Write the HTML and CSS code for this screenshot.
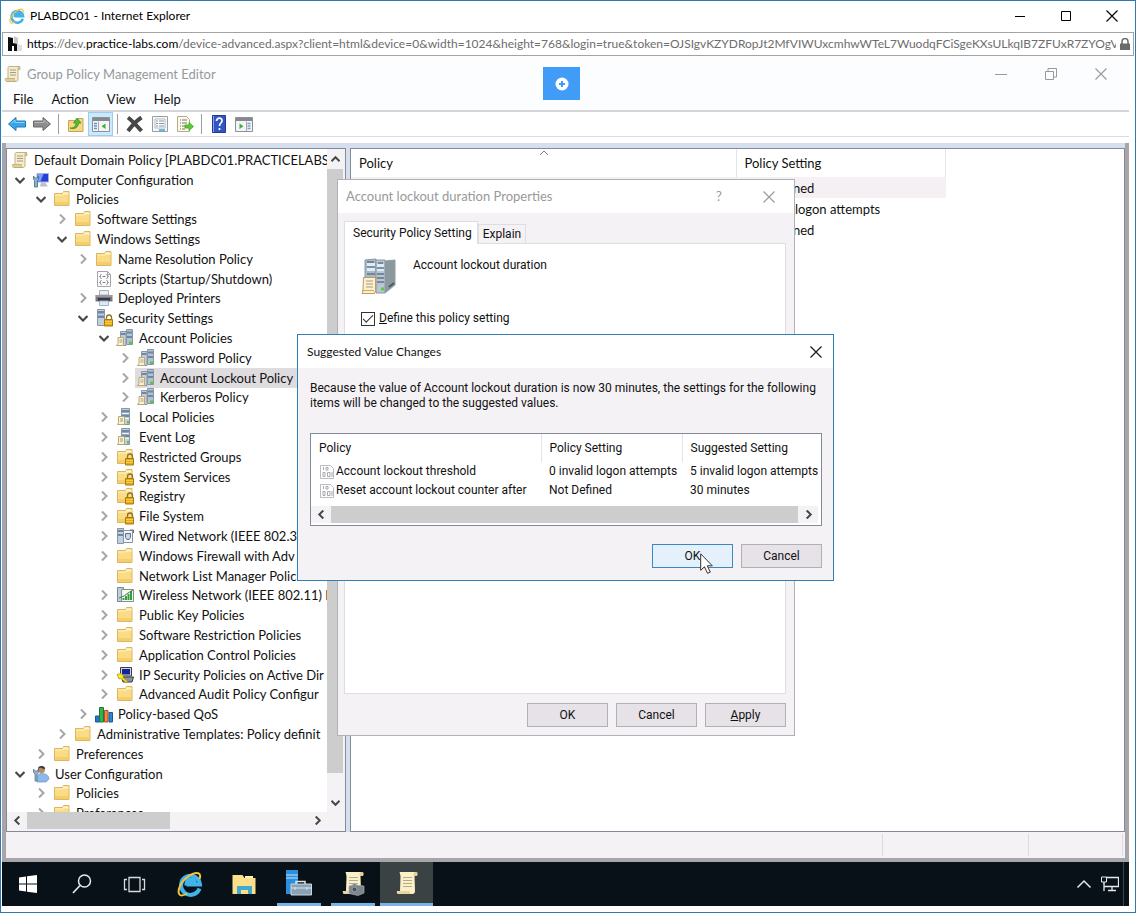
FILE: index.html
```html
<!DOCTYPE html>
<html lang="en">

<head>
    <meta charset="UTF-8">
    <meta name="viewport" content="width=device-width, initial-scale=1.0">
    <title>PLABDC01 - Internet Explorer</title>
    <link rel="stylesheet" href="styles.css">
</head>

<body>
    <!-- Shared icons -->
    <svg class="sprite" aria-hidden="true">
        <symbol id="open" viewBox="0 0 10 10"><path d="M0.500 3l4.500 4.500L9.500 3" fill="none" stroke="#484848" stroke-width="2.200"/></symbol>
        <symbol id="closed" viewBox="0 0 10 10"><path d="M3 0.500L7.500 5 3 9.500" fill="none" stroke="#a6a6a6" stroke-width="2"/></symbol>
        <symbol id="close" viewBox="0 0 12 12"><path d="M0.500 0.500l11 11M11.500 0.500l-11 11" fill="none" stroke="currentColor" stroke-width="1.100"/></symbol>
        <symbol id="folder" viewBox="0 0 18 18">
            <path d="M1.500 3.500h8l1-2h5.500v14h-14.500z" fill="#fbdc86" stroke="#dcb660"/>
            <path d="M10 2.500h5v1.500h-5z" fill="#fff6d8"/>
            <path d="M2 5h8l1-1h5" stroke="#fff0bd" fill="none"/>
            <path d="M2 12h13.500v3H2z" fill="#f5cd6b"/>
        </symbol>
        <symbol id="lock" viewBox="0 0 18 18">
            <path d="M11.500 11V8.500a2.500 2.500 0 0 1 5 0V11" fill="none" stroke="#8e7328" stroke-width="1.300"/>
            <path d="M9.500 10.500h8v6.500h-8z" fill="#e3a914" stroke="#a97a0b"/>
            <path d="M10 12.500h7M10 14.500h7" stroke="#f7cf52"/>
        </symbol>
        <symbol id="lockfolder" viewBox="0 0 18 18"><use href="#folder"/><use href="#lock"/></symbol>
        <symbol id="scroll" viewBox="0 0 18 18">
            <path d="M5 1.500h11c-2 0-2 1.500-2 3V14c0 2-1 2.500-2 2.500H3.500L4 13.500V4c0-1.500 0-2 1-2.500z" fill="#f6eccb" stroke="#c3b283"/>
            <path d="M14 1.500c2 0 2.500 2 2 3h-2" fill="#d8c48d" stroke="#b8a46d" stroke-width=".7"/>
            <path d="M1.500 13.500h9c-1 1.500 0 3 1.500 3H3c-1.500 0-2-1.500-1.500-3z" fill="#e2cf98" stroke="#b8a46d" stroke-width=".7"/>
            <path d="M6 5h6M6 7.500h6M6 10h6" stroke="#a59b83"/>
        </symbol>
        <symbol id="computer" viewBox="0 0 18 18">
            <path d="M5 2.500h11.500v8.500H5z" fill="#2440d8" stroke="#a9b4c8"/>
            <path d="M5.500 3h6l-3 7.500h-3z" fill="#7d9bfa"/>
            <path d="M9 11.500h4l3 4h-8z" fill="#b9c0ce"/>
            <path d="M1.500 5v3.500l1 1v6.500h3V9.500l1-1V5l-1.500 2h-2z" fill="#8eb1cf" stroke="#41698f" stroke-width=".8"/>
        </symbol>
        <symbol id="user" viewBox="0 0 18 18">
            <circle cx="9.500" cy="4.500" r="3.500" fill="#b98a63"/>
            <path d="M6 4c0-4 7-4 7.200 0-2 0-4-1-4.500-1.500z" fill="#3f352f"/>
            <path d="M4 15c0-5 3-6.500 6-6.500S17 10 17 14l-3 3H5z" fill="#8bb9e8" stroke="#6d96c4" stroke-width=".7"/>
            <path d="M1.500 4v3.500L3 9v7h2V9l1.500-1.500V4L5 6H3z" fill="#9bb0c6" stroke="#526d8b" stroke-width=".7"/>
        </symbol>
        <symbol id="script" viewBox="0 0 18 18">
            <path d="M2.500 1.500h10l3 3v12h-13z" fill="#fafafa" stroke="#a4a4a8"/>
            <path d="M12.500 1.500v3h3" fill="none" stroke="#a4a4a8"/>
            <path d="M6.500 4.500c-2 0 0 2-2 2 2 0 0 2 2 2M11.500 4.500c2 0 0 2 2 2-2 0 0 2-2 2M7.500 6.500h3M6.500 10.500c-2 0 0 2-2 2 2 0 0 2 2 2M11.500 10.500c2 0 0 2 2 2-2 0 0 2-2 2M7.500 12.500h3" fill="none" stroke="#7c7c84"/>
        </symbol>
        <symbol id="printer" viewBox="0 0 18 18">
            <path d="M4.500 1.500h9V6h-9z" fill="#edf1f7" stroke="#a8b0bb"/>
            <path d="M0.500 6h17v6.500H.5z" fill="#77797f"/>
            <path d="M1 7h16" stroke="#b7b9be"/>
            <path d="M3 9h12v3H3z" fill="#37393f"/>
            <path d="M4.500 12h9v4.500h-9z" fill="#dceaf8" stroke="#9db5d0"/>
        </symbol>
        <symbol id="tower" viewBox="0 0 18 18">
            <path d="M5.500.5h8v16h-8z" fill="#c3d0dc" stroke="#8797a8"/>
            <path d="M6 2h7v2.500H6zM6 6.500h7V9H6z" fill="#6d88a3"/>
            <path d="M6 5.500h7M6 10.500h7" stroke="#eef4fa"/>
            <path d="M11 13h2.500v2.500H11z" fill="#63c04a"/>
        </symbol>
        <symbol id="server" viewBox="0 0 18 18">
            <use href="#tower"/>
            <path d="M2.500 8.500h6v8h-7l1-2z" fill="#f8f1d8" stroke="#baa86f"/>
            <path d="M4 11h3M4 13h3" stroke="#a79b7b"/>
        </symbol>
        <symbol id="servers" viewBox="0 0 18 18">
            <path d="M4.500 2.500h5.500v14H4.500z" fill="#c3d0dc" stroke="#8797a8"/>
            <path d="M10.500.5h6v15h-6z" fill="#b3c2d0" stroke="#8797a8"/>
            <path d="M5 4h4.500v2H5zM11 2.500h5v2h-5zM11 7h5v2h-5z" fill="#6d88a3"/>
            <path d="M13 12.500h3V15h-3z" fill="#63c04a"/>
            <path d="M2 8.500h5.500v8h-7l1.500-2z" fill="#f8f1d8" stroke="#baa86f"/>
            <path d="M3.500 11h3M3.500 13h3" stroke="#a79b7b"/>
        </symbol>
        <symbol id="lockserver" viewBox="0 0 18 18">
            <path d="M2.500.5h7v16h-7z" fill="#c3d0dc" stroke="#8797a8"/>
            <path d="M3 2h6v2.500H3zM3 6.500h6V9H3z" fill="#6d88a3"/>
            <use href="#lock"/>
        </symbol>
        <symbol id="wired" viewBox="0 0 18 18">
            <path d="M1.500 1.500h6v15h-6z" fill="#c3d0dc" stroke="#8797a8"/>
            <path d="M2 3h5v2H2zM2 7h5v2H2z" fill="#6d88a3"/>
            <path d="M7.500 3.500h9v12h-9z" fill="#f5f7fa" stroke="#8592a2"/>
            <path d="M9.500 6.500h5v4l-1.500 2h-2l-1.500-2z" fill="#c8d5e4" stroke="#58718e"/>
            <path d="M14 3h3.500v3" fill="none" stroke="#6b6b6b"/>
        </symbol>
        <symbol id="wireless" viewBox="0 0 18 18">
            <path d="M1.500 1.500h6v14h-6z" fill="#c3cedb" stroke="#75879a"/>
            <path d="M5.500 3.500h12v12h-12z" fill="#f3faf1" stroke="#80937c"/>
            <path d="M7.500 14v-2M10 14v-4M12.500 14V8M15 14V5" stroke="#2f9f47" stroke-width="2"/>
            <path d="M3 12l5-2 4-3 5-3" fill="none" stroke="#51715a"/>
        </symbol>
        <symbol id="ipsec" viewBox="0 0 18 18">
            <path d="M4.500 1.500h11v8.500h-11z" fill="#d3d6dc" stroke="#3e3e46"/>
            <path d="M6 3h8v5.500H6z" fill="#13249a"/>
            <path d="M5.500 11h12l-1.500 5H7z" fill="#8e9299" stroke="#3e3e46"/>
            <path d="M1 8.500l4-1 2.500 2.500-.5 1.500 5 4.500-2 .500-5-4-2 .500z" fill="#ffe81d" stroke="#a28f06" stroke-width=".7"/>
        </symbol>
        <symbol id="bars" viewBox="0 0 18 18">
            <path d="M0.500 11h4v6h-4z" fill="#2278c9" stroke="#175895"/>
            <path d="M4.500 2.500h4V17h-4z" fill="#36b04f" stroke="#1d7a34"/>
            <path d="M9.500 5.500h3.500V17H9.500z" fill="#f08a43" stroke="#ad5420"/>
            <path d="M14 7.500h3.500V17H14z" fill="#3286cf" stroke="#175895"/>
        </symbol>
        <symbol id="item" viewBox="0 0 16 16">
            <path d="M1.500 1.500h10l3 3v10h-13z" fill="#fff" stroke="#bcbcc0"/>
            <path d="M4.500 3v3M7 3.500h2v2.500H7zM4 8.500h2v4H4zM8.500 8.500h2.500v4H8.500zM13 8v5" fill="none" stroke="#a8a8ae"/>
        </symbol>
        <symbol id="ie" viewBox="0 0 26 26">
            <path d="M22.500 17.500A9.500 9.500 0 1 1 23 13.500H9.500M9.500 12.500h8.500c-.5-5-8-5-8.500 0z" fill="none" stroke="#3fb3ea" stroke-width="4"/>
            <path d="M22.500 8C25 2 20-.5 12 5 3 11 0 20 2.500 23.500c1.500 2 5 .5 7.500-1" fill="none" stroke="#f3c53d" stroke-width="2"/>
        </symbol>
        <symbol id="bigscroll" viewBox="0 0 26 26">
            <path d="M6 2h17c-3 0-3 2-2.500 4l.5 15c0 2-1 3-2.500 3H5c-2 0-2.500-2-2-3h3l.5-14C6.500 4 5 2 6 2z" fill="#fcf0c9"/>
            <path d="M6 2h15c-2 1-2 3-1 4h3c1-2 1-4-1-4z" fill="#e6d195"/>
            <path d="M3 21h13c-1 1.500 0 3 2.500 3H5c-2 0-2.500-2-2-3z" fill="#ead69c"/>
            <path d="M9 7.500h9M9 10.500h9M9 13.500h9M9 16.500h9" stroke="#b4aa8e"/>
        </symbol>
    </svg>

    <div class="browser">
        <header class="browser-title">
            <svg class="icon-16"><use href="#ie"/></svg>
            <h1>PLABDC01 - Internet Explorer</h1>
            <div class="browser-controls">
                <button aria-label="Minimize"><svg viewBox="0 0 12 12"><path d="M1 6.500h10" stroke="currentColor"/></svg></button>
                <button aria-label="Maximize"><svg viewBox="0 0 12 12"><path d="M1.500 1.500h9v9h-9z" fill="none" stroke="currentColor"/></svg></button>
                <button aria-label="Close"><svg><use href="#close"/></svg></button>
            </div>
        </header>

        <div class="address">
            <svg class="icon-16" viewBox="0 0 16 16"><path d="M7 0l4 2v13H7z" fill="#c9c9c9"/><path d="M10 8l5 1v6h-5z" fill="#dedede"/><path d="M1 1l5 1v5l4 1v7H7v-5H5v5H1z" fill="#0c0c0c"/></svg>
            <p class="url"><b>https</b>://dev.<b>practice-labs.com</b>/device-advanced.aspx?client=html&amp;device=0&amp;width=1024&amp;height=768&amp;login=true&amp;token=OJSIgvKZYDRopJt2MfVIWUxcmhwWTeL7WuodqFCiSgeKXsULkqIB7ZFUxR7ZYOgV</p>
            <svg class="padlock" viewBox="0 0 10 12"><path d="M2 6V3.500a3 3 0 0 1 6 0V6" fill="none" stroke="#6b6b6b" stroke-width="1.500"/><path d="M0 5.500h10V12H0z" fill="#6b6b6b"/></svg>
        </div>

        <main class="remote">
            <div class="console">
                <header class="console-title">
                    <svg class="icon-18"><use href="#scroll"/></svg>
                    <h2>Group Policy Management Editor</h2>
                    <div class="console-controls">
                        <button aria-label="Minimize"><svg viewBox="0 0 12 12"><path d="M0 6.500h12" stroke="currentColor"/></svg></button>
                        <button aria-label="Restore"><svg viewBox="0 0 12 12"><path d="M.5 3.500h8v8h-8zM3 3V.5h8.500V9H9" fill="none" stroke="currentColor"/></svg></button>
                        <button aria-label="Close"><svg><use href="#close"/></svg></button>
                    </div>
                </header>

                <nav class="menu">
                    <button>File</button>
                    <button>Action</button>
                    <button>View</button>
                    <button>Help</button>
                </nav>

                <div class="toolbar">
                    <button aria-label="Back"><svg viewBox="0 0 18 18"><path d="M.5 9L8 2.500V6h9.500v6H8v3.500z" fill="#3aa6ea" stroke="#1f78b8"/><path d="M3 8.500L7 5v2.500h9.500" fill="none" stroke="#8fd2fa"/></svg></button>
                    <button aria-label="Forward"><svg viewBox="0 0 18 18"><path d="M17.500 9L10 2.500V6H.5v6H10v3.500z" fill="#8d8d8d" stroke="#686868"/><path d="M1.500 7.500H11V5l4 3.500" fill="none" stroke="#b8b8b8"/></svg></button>
                    <span class="separator"></span>
                    <button aria-label="Up one level"><svg viewBox="0 0 18 18"><path d="M1.500 5.500h8l1.500-2h5v13H1.500z" fill="#f6d783" stroke="#c9a452"/><path d="M3 13c4 0 6-2 6-5H6.500L10 3l4 5h-2.500c0 4-4 7-8.500 5z" fill="#56bd32" stroke="#35861c" stroke-width=".7"/></svg></button>
                    <button class="pressed" aria-label="Show console tree"><svg viewBox="0 0 18 18"><path d="M.5 2.500h17v14H.5z" fill="#f4f4f6" stroke="#8d9097"/><path d="M1 3h16v3H1z" fill="#85888f"/><path d="M2 8.500h3M2 11h3M2 13.500h3" stroke="#5c93d0" stroke-width="1.300"/><path d="M6.500 6.500v9.500" stroke="#a6a8ae"/><path d="M13.500 8.500v5.500l-4-2.800z" fill="#45ab3c"/></svg></button>
                    <span class="separator"></span>
                    <button aria-label="Delete"><svg viewBox="0 0 18 18"><path d="M2 2.500c4 3 9 8.500 13.500 13.500M15.500 2.500C10 6 5 12 2 16" fill="none" stroke="#484848" stroke-width="4"/></svg></button>
                    <button aria-label="Properties"><svg viewBox="0 0 18 18"><path d="M1.500 1.500h15v15h-15z" fill="#f5f7f9" stroke="#9a9ea4"/><path d="M4 4h10v9H4z" fill="#fff" stroke="#b5bac0"/><path d="M5 6h2M8 6h5M5 8.500h2M8 8.500h5M5 11h2M8 11h5" stroke="#7d94ab"/><path d="M8 15h6" stroke="#63c0d6" stroke-width="2"/></svg></button>
                    <button aria-label="Export list"><svg viewBox="0 0 18 18"><path d="M1.500 1.500h9l3 3v12h-12z" fill="#fcf8ea" stroke="#b7ab8c"/><path d="M4 5h1M6 5h5M4 8h1M6 8h5M4 11h1M6 11h3M4 14h1M6 14h3" stroke="#747474"/><path d="M9 10h4V7.500l4.500 4-4.500 4V13H9z" fill="#5bcc35" stroke="#359b1b" stroke-width=".7"/></svg></button>
                    <span class="separator"></span>
                    <button aria-label="Help"><svg viewBox="0 0 18 18"><path d="M2.500.5h13v17h-13z" fill="#3356c5" stroke="#213a93"/><path d="M3.500 1v16" stroke="#88a2f2"/><path d="M6.500 6c0-4 6-3.500 5.500 0 0 2-2.500 2-2.500 5M9.500 13v2" fill="none" stroke="#fff" stroke-width="1.700"/></svg></button>
                    <button aria-label="Show action pane"><svg viewBox="0 0 18 18"><path d="M.5 2.500h17v14H.5z" fill="#f4f4f6" stroke="#8d9097"/><path d="M1 3h16v3H1z" fill="#85888f"/><path d="M12.500 8.500h3M12.500 11h3M12.500 13.500h3" stroke="#7ba1c8" stroke-width="1.300"/><path d="M11.500 6.500v9.500" stroke="#a6a8ae"/><path d="M4.500 8.500v5.500l4-2.800z" fill="#45ab3c"/></svg></button>
                </div>

                <div class="workspace">
                    <section class="tree-pane">
                        <div class="tree-view">
                            <ul class="tree">
                                <li class="level-0"><svg class="icon-18"><use href="#scroll"/></svg>Default Domain Policy [PLABDC01.PRACTICELABS</li>
                                <li class="level-1"><button class="toggle" aria-label="Collapse"><svg><use href="#open"/></svg></button><svg class="icon-18"><use href="#computer"/></svg>Computer Configuration</li>
                                <li class="level-2"><button class="toggle" aria-label="Collapse"><svg><use href="#open"/></svg></button><svg class="icon-18"><use href="#folder"/></svg>Policies</li>
                                <li class="level-3"><button class="toggle" aria-label="Expand"><svg><use href="#closed"/></svg></button><svg class="icon-18"><use href="#folder"/></svg>Software Settings</li>
                                <li class="level-3"><button class="toggle" aria-label="Collapse"><svg><use href="#open"/></svg></button><svg class="icon-18"><use href="#folder"/></svg>Windows Settings</li>
                                <li class="level-4"><button class="toggle" aria-label="Expand"><svg><use href="#closed"/></svg></button><svg class="icon-18"><use href="#folder"/></svg>Name Resolution Policy</li>
                                <li class="level-4"><span class="toggle"></span><svg class="icon-18"><use href="#script"/></svg>Scripts (Startup/Shutdown)</li>
                                <li class="level-4"><button class="toggle" aria-label="Expand"><svg><use href="#closed"/></svg></button><svg class="icon-18"><use href="#printer"/></svg>Deployed Printers</li>
                                <li class="level-4"><button class="toggle" aria-label="Collapse"><svg><use href="#open"/></svg></button><svg class="icon-18"><use href="#lockserver"/></svg>Security Settings</li>
                                <li class="level-5"><button class="toggle" aria-label="Collapse"><svg><use href="#open"/></svg></button><svg class="icon-18"><use href="#servers"/></svg>Account Policies</li>
                                <li class="level-6"><button class="toggle" aria-label="Expand"><svg><use href="#closed"/></svg></button><svg class="icon-18"><use href="#servers"/></svg>Password Policy</li>
                                <li class="level-6 selected"><button class="toggle" aria-label="Expand"><svg><use href="#closed"/></svg></button><svg class="icon-18"><use href="#servers"/></svg>Account Lockout Policy</li>
                                <li class="level-6"><button class="toggle" aria-label="Expand"><svg><use href="#closed"/></svg></button><svg class="icon-18"><use href="#servers"/></svg>Kerberos Policy</li>
                                <li class="level-5"><button class="toggle" aria-label="Expand"><svg><use href="#closed"/></svg></button><svg class="icon-18"><use href="#server"/></svg>Local Policies</li>
                                <li class="level-5"><button class="toggle" aria-label="Expand"><svg><use href="#closed"/></svg></button><svg class="icon-18"><use href="#server"/></svg>Event Log</li>
                                <li class="level-5"><button class="toggle" aria-label="Expand"><svg><use href="#closed"/></svg></button><svg class="icon-18"><use href="#lockfolder"/></svg>Restricted Groups</li>
                                <li class="level-5"><button class="toggle" aria-label="Expand"><svg><use href="#closed"/></svg></button><svg class="icon-18"><use href="#lockfolder"/></svg>System Services</li>
                                <li class="level-5"><button class="toggle" aria-label="Expand"><svg><use href="#closed"/></svg></button><svg class="icon-18"><use href="#lockfolder"/></svg>Registry</li>
                                <li class="level-5"><button class="toggle" aria-label="Expand"><svg><use href="#closed"/></svg></button><svg class="icon-18"><use href="#lockfolder"/></svg>File System</li>
                                <li class="level-5"><button class="toggle" aria-label="Expand"><svg><use href="#closed"/></svg></button><svg class="icon-18"><use href="#wired"/></svg>Wired Network (IEEE 802.3)</li>
                                <li class="level-5"><button class="toggle" aria-label="Expand"><svg><use href="#closed"/></svg></button><svg class="icon-18"><use href="#folder"/></svg>Windows Firewall with Adv</li>
                                <li class="level-5"><span class="toggle"></span><svg class="icon-18"><use href="#folder"/></svg>Network List Manager Polic</li>
                                <li class="level-5"><button class="toggle" aria-label="Expand"><svg><use href="#closed"/></svg></button><svg class="icon-18"><use href="#wireless"/></svg>Wireless Network (IEEE 802.11) P</li>
                                <li class="level-5"><button class="toggle" aria-label="Expand"><svg><use href="#closed"/></svg></button><svg class="icon-18"><use href="#folder"/></svg>Public Key Policies</li>
                                <li class="level-5"><button class="toggle" aria-label="Expand"><svg><use href="#closed"/></svg></button><svg class="icon-18"><use href="#folder"/></svg>Software Restriction Policies</li>
                                <li class="level-5"><button class="toggle" aria-label="Expand"><svg><use href="#closed"/></svg></button><svg class="icon-18"><use href="#folder"/></svg>Application Control Policies</li>
                                <li class="level-5"><button class="toggle" aria-label="Expand"><svg><use href="#closed"/></svg></button><svg class="icon-18"><use href="#ipsec"/></svg>IP Security Policies on Active Dir</li>
                                <li class="level-5"><button class="toggle" aria-label="Expand"><svg><use href="#closed"/></svg></button><svg class="icon-18"><use href="#folder"/></svg>Advanced Audit Policy Configur</li>
                                <li class="level-4"><button class="toggle" aria-label="Expand"><svg><use href="#closed"/></svg></button><svg class="icon-18"><use href="#bars"/></svg>Policy-based QoS</li>
                                <li class="level-3"><button class="toggle" aria-label="Expand"><svg><use href="#closed"/></svg></button><svg class="icon-18"><use href="#folder"/></svg>Administrative Templates: Policy definit</li>
                                <li class="level-2"><button class="toggle" aria-label="Expand"><svg><use href="#closed"/></svg></button><svg class="icon-18"><use href="#folder"/></svg>Preferences</li>
                                <li class="level-1"><button class="toggle" aria-label="Collapse"><svg><use href="#open"/></svg></button><svg class="icon-18"><use href="#user"/></svg>User Configuration</li>
                                <li class="level-2"><button class="toggle" aria-label="Expand"><svg><use href="#closed"/></svg></button><svg class="icon-18"><use href="#folder"/></svg>Policies</li>
                                <li class="level-2"><button class="toggle" aria-label="Expand"><svg><use href="#closed"/></svg></button><svg class="icon-18"><use href="#folder"/></svg>Preferences</li>
                            </ul>
                        </div>
                        <div class="scroll-y">
                            <button aria-label="Scroll up"><svg class="flip"><use href="#open"/></svg></button>
                            <div class="track-y"><div class="thumb"></div></div>
                            <button aria-label="Scroll down"><svg><use href="#open"/></svg></button>
                        </div>
                        <div class="scroll-x">
                            <button aria-label="Scroll left"><svg class="turn-left"><use href="#open"/></svg></button>
                            <div class="track-x"><div class="thumb"></div></div>
                            <button aria-label="Scroll right"><svg class="turn-right"><use href="#open"/></svg></button>
                        </div>
                    </section>

                    <section class="list-pane">
                        <table class="policies">
                            <thead>
                                <tr><th>Policy<svg class="sort" viewBox="0 0 10 6"><path d="M1 5l4-4 4 4" fill="none" stroke="#777"/></svg></th><th>Policy Setting</th></tr>
                            </thead>
                            <tbody>
                                <tr class="current"><td><svg class="icon-16"><use href="#servers"/></svg>Account lockout duration</td><td>Not Defined</td></tr>
                                <tr><td><svg class="icon-16"><use href="#servers"/></svg>Account lockout threshold</td><td>0 invalid logon attempts</td></tr>
                                <tr><td><svg class="icon-16"><use href="#servers"/></svg>Reset account lockout counter after</td><td>Not Defined</td></tr>
                            </tbody>
                        </table>
                    </section>
                </div>

                <footer class="status"><span></span><span></span><span></span></footer>
            </div>

            <nav class="taskbar">
                <button aria-label="Start"><svg viewBox="0 0 26 26"><path d="M4 6.500l7-1v7H4zM12 5.300l10-1.300v8.500H12zM4 13.500h7v7l-7-1zM12 13.500h10V22l-10-1.300z" fill="#fff"/></svg></button>
                <button aria-label="Search"><svg viewBox="0 0 26 26"><circle cx="15.500" cy="10" r="6" fill="none" stroke="#e6e8ea" stroke-width="1.500"/><path d="M11 14.500L4 22" stroke="#e6e8ea" stroke-width="1.700"/></svg></button>
                <button aria-label="Task view"><svg viewBox="0 0 26 26"><path d="M6 6.500h11v14H6zM4 8.500H1.500v10H4M19 8.500h2.500v10H19" fill="none" stroke="#d8dadc" stroke-width="1.300"/></svg></button>
                <button aria-label="Internet Explorer"><svg><use href="#ie"/></svg></button>
                <button aria-label="File Explorer"><svg viewBox="0 0 26 26"><path d="M1.500 4h10l2 3h11v16h-23z" fill="#fbdf8b"/><path d="M14 5h8v2h-8z" fill="#fff0bd"/><path d="M6 23v-8h15v8h-4v-4h-7v4z" fill="#43a9cf"/></svg></button>
                <button class="running" aria-label="Server Manager"><svg viewBox="0 0 26 26"><path d="M0 0h12v24H0z" fill="#2b8fdf"/><path d="M0 5h12M0 8h12" stroke="#bfe0fa"/><path d="M10 14V11.500h9V14" fill="none" stroke="#dbe6ee" stroke-width="1.500"/><path d="M5 14h20.500v11H5z" fill="#8aa2b5" stroke="#cbd7e0"/><path d="M5 18h21M9 17v3M21 17v3" stroke="#d9e3ea"/></svg></button>
                <button class="running" aria-label="Group Policy Management"><svg viewBox="0 0 26 26"><use href="#bigscroll"/><path d="M9 16l4-1v-1.500h3V15l8 1v7l-6 2.500-9-2z" fill="#7d858c" stroke="#a4acb2" stroke-width=".7"/><circle cx="14.500" cy="19.500" r="2.500" fill="#4b5258" stroke="#9da5ab"/></svg></button>
                <button class="running active" aria-label="Group Policy Management Editor"><svg><use href="#bigscroll"/></svg></button>
                <div class="tray">
                    <button aria-label="Show hidden icons"><svg viewBox="0 0 18 18"><path d="M2.500 12.500L9 6l6.500 6.500" fill="none" stroke="#e6e8ea" stroke-width="1.500"/></svg></button>
                    <button aria-label="Network"><svg viewBox="0 0 18 18"><path d="M5 2.500h12.500v9H3M11 12v3M7 15.500h8M3 8v8" fill="none" stroke="#e6e8ea" stroke-width="1.300"/><path d="M.5 2h5v5h-5zM3 7v2" fill="#081018" stroke="#e6e8ea"/></svg></button>
                </div>
            </nav>

            <button class="device-menu" aria-label="Device menu"><svg viewBox="0 0 14 14"><circle cx="7" cy="7" r="6.500" fill="#fff"/><path d="M7 4v6M4 7h6" stroke="#419cf8" stroke-width="2"/></svg></button>

            <section class="window properties">
                <header class="window-title">
                    <h2>Account lockout duration Properties</h2>
                    <button aria-label="Help">?</button>
                    <button aria-label="Close"><svg><use href="#close"/></svg></button>
                </header>
                <div class="properties-body">
                    <div class="tabs">
                        <button class="tab active">Security Policy Setting</button>
                        <button class="tab">Explain</button>
                    </div>
                    <div class="tab-panel">
                        <div class="policy-name">
                            <svg viewBox="0 0 36 36">
                                <path d="M4 2l11-1v32H4z" fill="#a9b8c6" stroke="#8a98a4"/>
                                <path d="M6 5h8v8H6z" fill="#e1ebf5"/><path d="M6 4h7M6 9h8M6 16h8M6 20h8" stroke="#5f7588" stroke-width="1.500"/>
                                <path d="M24 3l10-1v25l-10 8z" fill="#8b999f" stroke="#8f9aa0"/>
                                <path d="M15 2h9v33h-9z" fill="#b9c7d3" stroke="#8a98a4"/>
                                <path d="M16 6h7v7h-7z" fill="#deeaf5"/><path d="M17 5h5M16 10h7M16 16h7M16 20h7M16 24h7" stroke="#5f7588" stroke-width="1.500"/>
                                <path d="M20 31h3" stroke="#60c93c" stroke-width="3"/>
                                <path d="M28 29l5-4" stroke="#4d5960" stroke-width="2"/>
                                <path d="M2.500 19.500h12v13l-1 3H1l1-3z" fill="#fbf0d2" stroke="#bf9c5a"/>
                                <path d="M5 23h7M5 26h7M5 29h7" stroke="#a79a7c"/><path d="M1 32.500h12" stroke="#d7a75a"/>
                            </svg>
                            <p>Account lockout duration</p>
                        </div>
                        <label class="check"><input type="checkbox" checked><span><u>D</u>efine this policy setting</span></label>
                    </div>
                    <div class="actions">
                        <button>OK</button>
                        <button>Cancel</button>
                        <button><u>A</u>pply</button>
                    </div>
                </div>
            </section>

            <section class="window suggested">
                <header class="window-title">
                    <h2>Suggested Value Changes</h2>
                    <button aria-label="Close"><svg><use href="#close"/></svg></button>
                </header>
                <div class="suggested-body">
                    <p>Because the value of Account lockout duration is now 30 minutes, the settings for the following items will be changed to the suggested values.</p>
                    <div class="changes">
                        <table>
                            <thead>
                                <tr><th>Policy</th><th>Policy Setting</th><th>Suggested Setting</th></tr>
                            </thead>
                            <tbody>
                                <tr><td><svg class="icon-16"><use href="#item"/></svg>Account lockout threshold</td><td>0 invalid logon attempts</td><td>5 invalid logon attempts</td></tr>
                                <tr><td><svg class="icon-16"><use href="#item"/></svg>Reset account lockout counter after</td><td>Not Defined</td><td>30 minutes</td></tr>
                            </tbody>
                        </table>
                        <div class="scroll-x">
                            <button aria-label="Scroll left"><svg class="turn-left"><use href="#open"/></svg></button>
                            <div class="track-x"><div class="thumb"></div></div>
                            <button aria-label="Scroll right"><svg class="turn-right"><use href="#open"/></svg></button>
                        </div>
                    </div>
                    <div class="actions">
                        <button class="default">OK</button>
                        <button>Cancel</button>
                    </div>
                </div>
                <svg class="cursor" viewBox="0 0 13 21"><path d="M.7.800v16.500l3.800-3.500 3 6.500 2.800-1.200-3-6.300h5z" fill="#fff" stroke="#333" stroke-width="1"/></svg>
            </section>
        </main>
    </div>
</body>

</html>
```

FILE: styles.css
```css
:root {
    --ui-font: Lato, "Open Sans", sans-serif;
    --dialog-font: Roboto, "Liberation Sans", sans-serif;
    --face: #f5f2f6;
    --edge: #a8a5aa;
    --pane-border: #858a99;
    --thumb: #cdcdcd;
}

* {
    box-sizing: border-box;
}

body {
    margin: 0;
    font-family: var(--ui-font);
    font-size: 12px;
    line-height: 16px;
    color: #111;
    background: white;
}

h1,
h2,
p,
ul {
    margin: 0;
    padding: 0;
    font-size: inherit;
    font-weight: normal;
}

button {
    margin: 0;
    padding: 0;
    border: none;
    background: none;
    color: inherit;
    font: inherit;
    display: flex;
    align-items: center;
    justify-content: center;
}

svg {
    display: block;
    flex: none;
}

table {
    border-collapse: collapse;
    table-layout: fixed;
}

th,
td {
    padding: 0 8px;
    text-align: left;
    font-weight: normal;
    white-space: nowrap;
}

.sprite {
    position: absolute;
    width: 0;
    height: 0;
}

.icon-16 {
    width: 16px;
    height: 16px;
}

.icon-18 {
    width: 18px;
    height: 18px;
}

/* Browser window */
.browser {
    display: flex;
    flex-direction: column;
    height: 100vh;
    min-height: 700px;
    border: 1px solid #2f7aad;
    overflow: hidden;
}

.browser-title {
    display: flex;
    align-items: center;
    flex: none;
    height: 31px;
    padding: 0 0 2px 8px;
    gap: 5px;
    color: black;
}

.browser-controls {
    display: flex;
    margin-left: auto;
}

.browser-controls button {
    width: 46px;
}

.browser-controls svg,
.console-controls svg,
.window-title svg {
    width: 12px;
    height: 12px;
}

.address {
    display: flex;
    align-items: center;
    flex: none;
    height: 24px;
    margin: 0 1px 1px;
    padding: 0 3px 0 4px;
    gap: 4px;
    border: 1px solid #a3a3a3;
    color: #6d6d6d;
}

.url {
    flex: 1;
    overflow: hidden;
    white-space: nowrap;
}

.url b {
    font-weight: normal;
    color: black;
}

.padlock {
    width: 10px;
    height: 12px;
}

/* Remote desktop */
.remote {
    position: relative;
    display: flex;
    flex-direction: column;
    flex: 1;
    min-height: 0;
    margin: 0 6px 6px 1px;
}

.console {
    display: flex;
    flex-direction: column;
    flex: 1;
    min-height: 0;
    font-size: 13px;
}

.console-title {
    display: flex;
    align-items: center;
    flex: none;
    height: 30px;
    padding: 4px 0 0 2px;
    gap: 5px;
    background: #fcfdfe;
    color: #999;
}

.console-controls {
    display: flex;
    margin-left: auto;
    padding-right: 3px;
}

.console-controls button {
    width: 50px;
}

.menu {
    display: flex;
    flex: none;
    height: 25px;
    padding-left: 11px;
    gap: 18px;
    background: #fcfdfe;
    border-bottom: 2px solid #d5d5d9;
}

.toolbar {
    display: flex;
    align-items: center;
    flex: none;
    height: 25px;
    padding-left: 2px;
    border-bottom: 1px solid #dedbe0;
}

.toolbar button {
    width: 25px;
    height: 24px;
}

.toolbar svg {
    width: 18px;
    height: 18px;
}

.toolbar .pressed {
    background: #cce8fb;
    border: 1px solid #9bcdf0;
}

.separator {
    width: 1px;
    height: 20px;
    margin: 0 4px;
    background: #9d9da1;
}

.workspace {
    display: flex;
    flex: 1;
    min-height: 0;
    gap: 4px;
    margin-top: 6px;
    padding-top: 5px;
    background: #d5dfee;
    border: solid var(--edge);
    border-width: 0 4px;
}

.tree-pane {
    display: grid;
    grid-template-columns: 1fr 16px;
    grid-template-rows: 1fr 17px;
    flex: none;
    width: 340px;
    padding: 0 2px 2px 0;
    background: var(--face);
    border: 1px solid var(--pane-border);
}

.tree-view {
    overflow: hidden;
    padding-top: 1px;
    background: white;
}

.tree {
    display: grid;
    grid-auto-rows: 1fr;
    height: 673px;
    list-style: none;
}

.tree li {
    display: flex;
    align-items: center;
    white-space: nowrap;
}

.tree .icon-18 {
    margin: 0 5px 0 2px;
}

.toggle {
    flex: none;
    width: 21px;
    height: 18px;
}

.toggle svg {
    width: 10px;
    height: 10px;
}

.level-0,
.level-1 {
    padding-left: 2px;
}

.level-2 {
    padding-left: 23px;
}

.level-3 {
    padding-left: 44px;
}

.level-4 {
    padding-left: 65px;
}

.level-5 {
    padding-left: 86px;
}

.level-6 {
    padding-left: 107px;
}

.tree .selected {
    background: linear-gradient(#dfdce0, #dfdce0) 128px 0 no-repeat;
}

/* Scroll bars */
.scroll-y {
    display: flex;
    flex-direction: column;
}

.scroll-y button {
    flex: none;
    height: 20px;
}

.scroll-x {
    display: flex;
    background: var(--face);
}

.tree-pane .scroll-x {
    grid-column: 1;
}

.scroll-x button {
    flex: none;
    width: 20px;
}

.scroll-y svg,
.scroll-x svg {
    width: 9px;
    height: 9px;
}

.track-y,
.track-x {
    flex: 1;
}

.thumb {
    width: 100%;
    height: 100%;
    background: var(--thumb);
}

.track-y .thumb {
    height: 97%;
}

.tree-pane .track-x .thumb {
    width: 51%;
}

.flip {
    transform: rotate(180deg);
}

.turn-left {
    transform: rotate(90deg);
}

.turn-right {
    transform: rotate(-90deg);
}

/* Policy list */
.list-pane {
    flex: 1;
    min-width: 0;
    background: white;
    border: 1px solid var(--pane-border);
}

.policies {
    width: 595px;
}

.policies th {
    position: relative;
    height: 28px;
    border-right: 1px solid #e4e4e8;
}

.policies th:first-child {
    width: 385px;
}

.sort {
    position: absolute;
    top: 1px;
    left: 50%;
    width: 10px;
    height: 6px;
    margin-left: -4px;
}

.policies td {
    height: 21px;
}

.policies td svg {
    display: inline-block;
    vertical-align: middle;
    margin-right: 4px;
}

.current {
    background: #f4f0f4;
}

.status {
    display: flex;
    justify-content: flex-end;
    flex: none;
    height: 30px;
    padding: 2px 2px 2px 0;
    background: var(--face);
    border: 4px solid var(--edge);
    border-top: none;
}

.status span {
    border-right: 1px solid #dcdadf;
    width: 146px;
}

.status span:last-child {
    width: 94px;
}

/* Taskbar */
.taskbar {
    display: flex;
    flex: none;
    height: 44px;
    background: #081018;
}

.taskbar button {
    width: 52px;
    margin-right: 2px;
}

.taskbar svg {
    width: 26px;
    height: 26px;
}

.taskbar .running {
    width: 44px;
    margin: 0 5px;
    border-bottom: 3px solid #7ab3e6;
}

.taskbar .active {
    width: 53px;
    margin: 0;
    background: #3a4244;
}

.taskbar .tray {
    display: flex;
    margin-left: auto;
    border-right: 1px solid #3c4549;
    margin-right: 5px;
}

.taskbar .tray button {
    width: 26px;
    margin: 0;
}

.tray svg {
    width: 18px;
    height: 18px;
}

.device-menu {
    position: absolute;
    top: 10px;
    left: 541px;
    width: 37px;
    height: 33px;
    background: #419cf8;
}

.device-menu svg {
    width: 14px;
    height: 14px;
}

/* Dialogs */
.window {
    position: absolute;
    display: flex;
    flex-direction: column;
    background: var(--face);
    font-family: var(--dialog-font);
    line-height: 15px;
}

.window-title {
    display: flex;
    align-items: center;
    flex: none;
    height: 33px;
    padding-left: 9px;
    background: white;
    font-family: var(--ui-font);
}

.window-title h2 {
    margin-right: auto;
}

.window-title button {
    width: 34px;
}

.properties {
    top: 122px;
    left: 335px;
    width: 458px;
    height: 557px;
    border: 1px solid #b3b0b5;
}

.properties .window-title {
    padding-left: 8px;
    color: #999;
    font-size: 13px;
}

.properties .window-title button {
    width: 50px;
}

.properties-body {
    display: flex;
    flex-direction: column;
    flex: 1;
    padding: 8px 8px 8px 6px;
}

.tabs {
    display: flex;
    align-items: flex-end;
}

.tab {
    height: 19px;
    padding: 0 4px;
    border: 1px solid #e0dde2;
    border-bottom: none;
}

.tab.active {
    height: 23px;
    margin-bottom: -1px;
    padding: 0 5px 0 8px;
    background: white;
    z-index: 1;
}

.tab-panel {
    flex: 1;
    padding: 14px 16px;
    background: white;
    border: 1px solid #e0dde2;
}

.policy-name {
    display: flex;
    gap: 16px;
}

.policy-name svg {
    width: 36px;
    height: 36px;
}

.check {
    display: flex;
    align-items: center;
    gap: 4px;
    margin-top: 17px;
}

.check input {
    appearance: none;
    width: 14px;
    height: 14px;
    margin: 0;
    border: 1px solid #333;
    background: white;
}

.check input:checked::before {
    content: "";
    display: block;
    width: 9px;
    height: 4px;
    margin: 2px 1px;
    border: solid #333;
    border-width: 0 0 1px 1px;
    transform: rotate(-45deg);
}

.actions {
    display: flex;
    justify-content: flex-end;
    gap: 8px;
}

.actions button {
    width: 81px;
    height: 24px;
    background: #e6e2e7;
    border: 1px solid #b3b0b5;
}

.actions .default {
    background: #e4f1fc;
    border-color: #3c87c0;
}

.properties .actions {
    margin-top: 9px;
}

.suggested {
    top: 277px;
    left: 295px;
    width: 537px;
    height: 247px;
    border: 1px solid #2f7fb8;
}

.suggested-body {
    padding: 13px 11px 13px 12px;
}

.changes {
    margin: 22px 0 18px;
    background: white;
    border: 1px solid var(--pane-border);
}

.changes table {
    width: 100%;
}

.changes th {
    height: 28px;
    border-right: 1px solid #e4e4e8;
}

.changes th:first-child {
    width: 230px;
}

.changes th:nth-child(2) {
    width: 141px;
}

.changes th:last-child {
    border-right: none;
}

.changes td {
    height: 19px;
    padding: 0 0 0 8px;
}

.changes td svg {
    display: inline-block;
    vertical-align: middle;
    margin-right: 1px;
}

.changes .scroll-x {
    height: 17px;
    margin: 6px 3px 2px 0;
}

.cursor {
    position: absolute;
    top: 218px;
    left: 402px;
    width: 13px;
    height: 21px;
}
```
